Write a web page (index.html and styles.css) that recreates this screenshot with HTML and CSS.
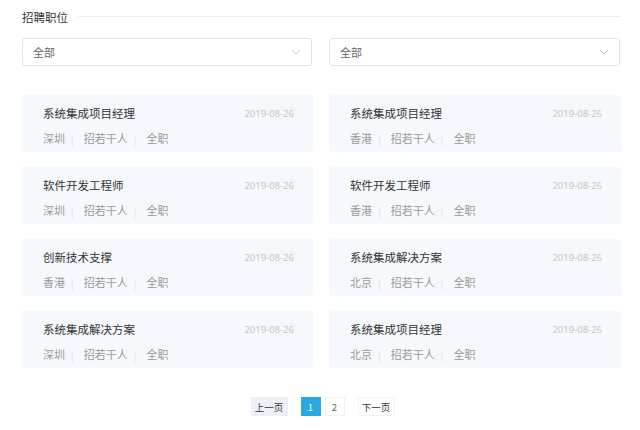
FILE: index.html
```html
<!DOCTYPE html>
<html lang="zh">
<head>
<meta charset="utf-8">
<link rel="stylesheet" href="styles.css">
</head>
<body>
<div class="page">
  <div class="head">
    <span class="head-title">招聘职位</span>
    <span class="head-line"></span>
  </div>
  <div class="filters">
    <div class="select"><span>全部</span><svg class="chev" width="10" height="6" viewBox="0 0 10 6"><path d="M1 1l4 4 4-4" fill="none" stroke="#c8c8c8" stroke-width="1"/></svg></div>
    <div class="select"><span>全部</span><svg class="chev" width="10" height="6" viewBox="0 0 10 6"><path d="M1 1l4 4 4-4" fill="none" stroke="#c8c8c8" stroke-width="1"/></svg></div>
  </div>
  <div class="jobs">
    <div class="card"><div class="row1"><span class="title">系统集成项目经理</span><span class="date">2019-08-26</span></div><div class="meta"><span>深圳</span><i>|</i><span>招若干人</span><i>|</i><span>全职</span></div></div>
    <div class="card"><div class="row1"><span class="title">系统集成项目经理</span><span class="date">2019-08-26</span></div><div class="meta"><span>香港</span><i>|</i><span>招若干人</span><i>|</i><span>全职</span></div></div>
    <div class="card"><div class="row1"><span class="title">软件开发工程师</span><span class="date">2019-08-26</span></div><div class="meta"><span>深圳</span><i>|</i><span>招若干人</span><i>|</i><span>全职</span></div></div>
    <div class="card"><div class="row1"><span class="title">软件开发工程师</span><span class="date">2019-08-26</span></div><div class="meta"><span>香港</span><i>|</i><span>招若干人</span><i>|</i><span>全职</span></div></div>
    <div class="card"><div class="row1"><span class="title">创新技术支撑</span><span class="date">2019-08-26</span></div><div class="meta"><span>香港</span><i>|</i><span>招若干人</span><i>|</i><span>全职</span></div></div>
    <div class="card"><div class="row1"><span class="title">系统集成解决方案</span><span class="date">2019-08-26</span></div><div class="meta"><span>北京</span><i>|</i><span>招若干人</span><i>|</i><span>全职</span></div></div>
    <div class="card"><div class="row1"><span class="title">系统集成解决方案</span><span class="date">2019-08-26</span></div><div class="meta"><span>深圳</span><i>|</i><span>招若干人</span><i>|</i><span>全职</span></div></div>
    <div class="card"><div class="row1"><span class="title">系统集成项目经理</span><span class="date">2019-08-26</span></div><div class="meta"><span>北京</span><i>|</i><span>招若干人</span><i>|</i><span>全职</span></div></div>
  </div>
  <div class="pager">
    <span class="pbtn prev">上一页</span>
    <span class="pnum active">1</span>
    <span class="pnum">2</span>
    <span class="pbtn next">下一页</span>
  </div>
</div>
</body>
</html>
```

FILE: styles.css
```css
* { box-sizing: border-box; }
html, body { margin: 0; padding: 0; background: #fff; }
body {
  font-family: "Noto Sans CJK SC", "Noto Sans", sans-serif;
  color: #333;
}
.page {
  width: 599px;
  margin-left: 22px;
  padding-top: 7px;
}
.head {
  display: flex;
  align-items: center;
  height: 20px;
}
.head-title {
  font-size: 11.5px;
  color: #333;
  line-height: 20px;
}
.head-line {
  flex: 1;
  height: 1px;
  background: #eeeeee;
  margin-left: 10px;
  margin-top: -2px;
}
.filters {
  display: grid;
  grid-template-columns: 290px 291px;
  column-gap: 17px;
  margin-top: 11px;
}
.select {
  height: 28px;
  border: 1px solid #e4e4e4;
  border-radius: 3px;
  display: flex;
  align-items: center;
  justify-content: space-between;
  padding: 0 10px 0 10px;
  font-size: 11px;
  color: #666;
}
.chev { margin-top: -1px; }
.jobs {
  display: grid;
  grid-template-columns: 291px 292px;
  column-gap: 16px;
  row-gap: 15px;
  margin-top: 29px;
}
.card {
  height: 57px;
  background: #f5f9fd;
  border-radius: 2px;
  padding: 8px 19px 0 21px;
}
.row1 {
  display: flex;
  justify-content: space-between;
  align-items: center;
  height: 20px;
}
.title {
  font-size: 11.5px;
  color: #333;
}
.date {
  font-size: 9.5px;
  color: #c6c6c6;
  font-family: "Noto Sans", "Open Sans", sans-serif;
}
.meta {
  display: flex;
  align-items: center;
  margin-top: 6px;
  font-size: 11px;
  color: #9a9a9a;
  height: 18px;
}
.meta i {
  font-style: normal;
  color: #e0e0e0;
  font-size: 10px;
  margin: 0 10px 0 6px;
}
.pager {
  display: flex;
  justify-content: center;
  align-items: center;
  margin-top: 29px;
  padding-left: 2px;
  font-size: 9.5px;
}
.pbtn, .pnum {
  height: 19px;
  display: flex;
  align-items: center;
  justify-content: center;
  color: #333;
}
.pbtn { width: 37px; }
.prev { background: #eef0f8; margin-right: 11px; }
.next { background: #fff; border: 1px solid #f4f4f4; margin-left: 11px; }
.pnum {
  width: 20px;
  border: 1px solid #f2f2f2;
  color: #666;
  margin: 0 2px;
}
.pnum.active {
  background: #29a9e1;
  border-color: #29a9e1;
  color: #fff;
}
```
